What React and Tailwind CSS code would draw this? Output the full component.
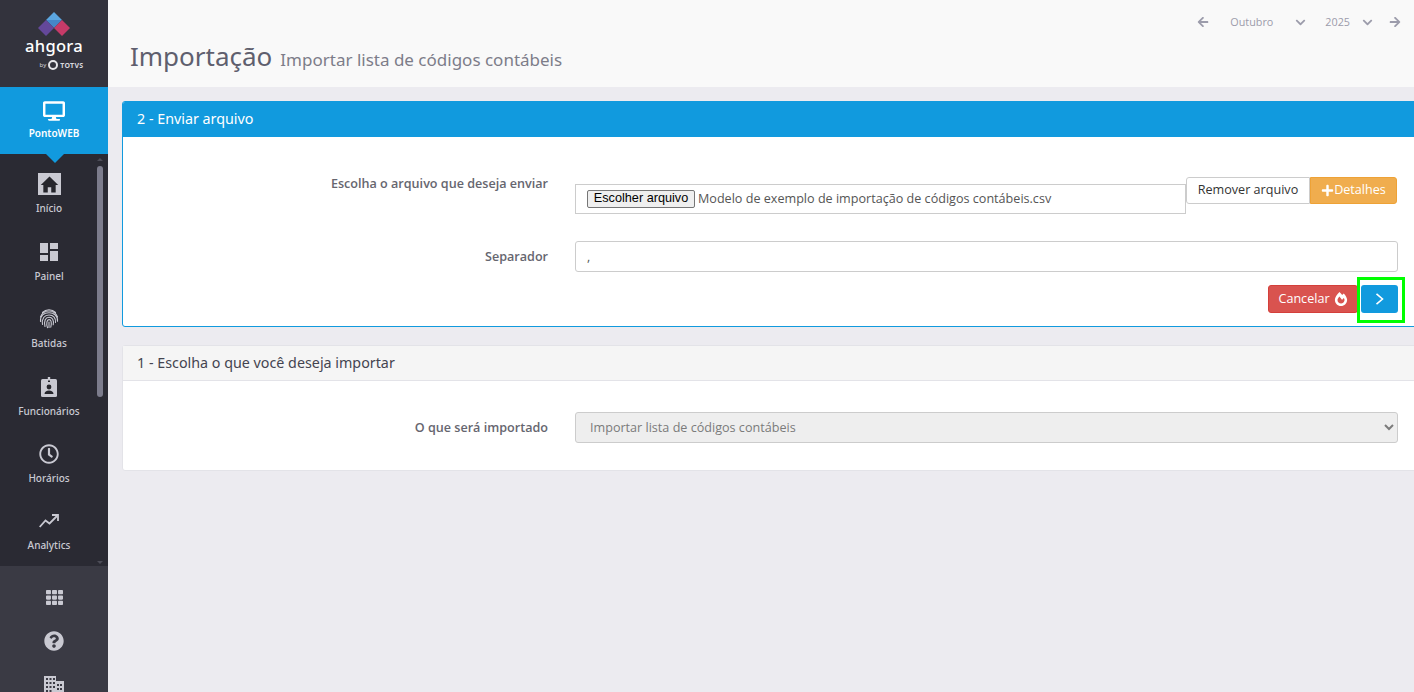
import React from "react";
import {
  FaArrowLeft,
  FaArrowRight,
  FaChevronDown,
  FaDesktop,
  FaFireAlt,
  FaPlus,
  FaQuestionCircle,
  FaRegClock,
  FaTh,
} from "react-icons/fa";

const titleFont = "font-['Noto_Sans','Open_Sans',sans-serif]";
const bodyFont = "font-['Open_Sans',sans-serif]";

function HomeIcon() {
  return (
    <span className="flex h-[22px] w-[23px] items-center justify-center bg-[#c9c9d2]">
      <svg viewBox="0 0 24 24" className="h-[19px] w-[19px]" fill="#25252c">
        <path d="M12 2 1 12.5h3.2V22h5.6v-6.5h4.4V22h5.6v-9.5H23L12 2z" />
      </svg>
    </span>
  );
}

function PainelIcon() {
  return (
    <svg viewBox="0 0 18 18" className="h-[18px] w-[18px]" fill="#c9c9d2">
      <rect x="0" y="0" width="8" height="10" />
      <rect x="10" y="0" width="8" height="6" />
      <rect x="0" y="12" width="8" height="6" />
      <rect x="10" y="8" width="8" height="10" />
    </svg>
  );
}

function FingerprintIcon() {
  return (
    <svg viewBox="0 0 20 20" className="h-[20px] w-[20px]" fill="none" stroke="#c9c9d2" strokeWidth="1.1" strokeLinecap="round">
      <path d="M3.5 3.5A9 9 0 0 1 16.5 3.5" />
      <path d="M1.5 8A9 9 0 0 1 18.5 8" />
      <path d="M1.5 12.5C1 6.5 5 3.7 10 3.7s9 3.3 8.5 8.5" />
      <path d="M3.5 15.5C2.5 9.5 5.5 6 10 6s7 3 6.5 7.5" />
      <path d="M6 17.5C4.7 12 6.5 8.3 10 8.3s5 2.7 4.2 7.5" />
      <path d="M8.5 18.7C7 14 8 10.6 10 10.6s3 2.4 1.8 7.6" />
      <path d="M10 13v5.5" />
    </svg>
  );
}

function BadgeIcon() {
  return (
    <svg viewBox="0 0 16 20" className="h-[20px] w-[16px]">
      <rect x="0" y="2" width="16" height="18" rx="1.5" fill="#c9c9d2" />
      <rect x="6.8" y="0" width="2.4" height="5" fill="#c9c9d2" />
      <rect x="7" y="3.5" width="2" height="1.5" fill="#25252c" />
      <circle cx="8" cy="10" r="2.4" fill="#25252c" />
      <path d="M3.5 17c0-2.4 2-3.6 4.5-3.6s4.500 1.200 4.500 3.600z" fill="#25252c" />
    </svg>
  );
}

function TrendIcon() {
  return (
    <svg viewBox="0 0 20 14" className="h-[14px] w-[20px]" fill="none" stroke="#c9c9d2" strokeWidth="1.8">
      <path d="M0.7 13 6.500 6.500 10.500 9.500 18 2" />
      <path d="M13 1h6v6" strokeLinejoin="miter" />
    </svg>
  );
}

function BuildingIcon() {
  return (
    <svg viewBox="0 0 20 20" className="h-[20px] w-[20px]" fill="#c9c9d2">
      <path d="M0 0h12v5h8v15H0zM2 2v2h2V2zm3.500 0v2h2V2zM9 2v2h2V2zM2 6v2h2V6zm3.500 0v2h2V6zM9 6v2h2V6zM2 10v2h2v-2zm3.500 0v2h2v-2zM9 10v2h2v-2zM2 14v2h2v-2zm3.500 0v2h2v-2zM13 8v2h2V8zm3 0v2h2V8zm-3 4v2h2v-2zm3 0v2h2v-2z" fillRule="evenodd" />
    </svg>
  );
}

function Logo() {
  return (
    <div className="flex h-[87px] shrink-0 flex-col items-center bg-[#33333d] pt-[12px]">
      <svg viewBox="0 0 32 24" className="h-[24px] w-[32px]">
        <path d="M16 0 24 8 16 8 8 8z" fill="#5ba6e0" />
        <path d="M8 8H24L16 16z" fill="#4585c8" />
        <path d="M8 8 16 16 8 24 0 16z" fill="#64489a" />
        <path d="M24 8 32 16 24 24 16 16z" fill="#c63a68" />
      </svg>
      <span className={`${titleFont} mt-[1px] text-[16.500px] leading-[18px] font-medium tracking-[0.3px] text-white`}>
        ahgora
      </span>
      <div className="mt-[5px] ml-[15px] flex items-center gap-[2px] text-[#d8d8de]">
        <span className="text-[6px] leading-none">by</span>
        <span className="h-[10px] w-[10px] rounded-full border-2 border-[#e6e6ea]" />
        <span className={`${titleFont} text-[7px] leading-none font-bold tracking-[0.3px]`}>TOTVS</span>
      </div>
    </div>
  );
}

function NavItem({ icon, label }) {
  return (
    <div className="flex h-[67.400px] w-[98px] shrink-0 flex-col items-center justify-end pb-[6px]">
      <div className="flex h-[24px] items-center justify-center text-[#c9c9d2]">{icon}</div>
      <span className={`${titleFont} mt-[5px] text-[10px] leading-[14px] font-medium text-[#c9c9d2]`}>
        {label}
      </span>
    </div>
  );
}

function Sidebar() {
  return (
    <aside className="flex h-full w-[108px] shrink-0 flex-col overflow-hidden">
      <Logo />
      <div className="relative flex h-[67px] shrink-0 flex-col items-center bg-[#119ade] pt-[13px] text-white">
        <FaDesktop className="text-[22px]" />
        <span className={`${titleFont} mt-[4px] text-[10px] leading-[14px] font-semibold`}>PontoWEB</span>
        <span className="absolute top-[67px] left-[46px] z-10 h-0 w-0 border-x-[9px] border-t-[9px] border-x-transparent border-t-[#119ade]" />
      </div>
      <nav className="relative flex h-[412px] shrink-0 flex-col bg-[#2a2a33]">
        <NavItem icon={<HomeIcon />} label="Início" />
        <NavItem icon={<PainelIcon />} label="Painel" />
        <NavItem icon={<FingerprintIcon />} label="Batidas" />
        <NavItem icon={<BadgeIcon />} label="Funcionários" />
        <NavItem icon={<FaRegClock className="text-[20px]" />} label="Horários" />
        <NavItem icon={<TrendIcon />} label="Analytics" />
        <span className="absolute top-[4px] right-[5px] h-0 w-0 border-x-[3px] border-b-[3px] border-x-transparent border-b-[#4d4d58]" />
        <span className="absolute top-[12px] right-[5px] h-[231px] w-[6px] rounded-[3px] bg-[#7c7c8c]" />
        <span className="absolute right-[5px] bottom-[2px] h-0 w-0 border-x-[3px] border-t-[3px] border-x-transparent border-t-[#4d4d58]" />
      </nav>
      <div className="flex flex-1 flex-col items-center gap-[25px] bg-[#3a3a44] pt-[23px] text-[#c9c9d2]">
        <FaTh className="shrink-0 text-[17px]" />
        <FaQuestionCircle className="shrink-0 text-[20px]" />
        <BuildingIcon />
      </div>
    </aside>
  );
}

function TopBar() {
  return (
    <header className="flex h-[87px] shrink-0 flex-col bg-[#f9f9f9] pl-[22px]">
      <div className={`${bodyFont} flex h-[44px] items-center justify-end pr-[13px] text-[10.800px] text-[#9c9cab]`}>
        <FaArrowLeft className="mr-[21px] text-[12px]" />
        <span>Outubro</span>
        <FaChevronDown className="mr-[19px] ml-[22px] text-[11px]" />
        <span>2025</span>
        <FaChevronDown className="mr-[16px] ml-[12px] text-[11px]" />
        <FaArrowRight className="text-[12px]" />
      </div>
      <div className={`${titleFont} -mt-[2px] flex items-baseline gap-[8px]`}>
        <h1 className="text-[26px] leading-[28px] text-[#5f5f6e]">Importação</h1>
        <span className="text-[17px] leading-[28px] text-[#7d7d89]">Importar lista de códigos contábeis</span>
      </div>
    </header>
  );
}

function FormRow({ label, children, className = "" }) {
  return (
    <div className={`flex ${className}`}>
      <label className={`${bodyFont} w-[425px] shrink-0 text-right text-[12.600px] leading-[18px] font-semibold text-[#66666f]`}>
        {label}
      </label>
      <div className="ml-[27px] min-w-0 flex-1">{children}</div>
    </div>
  );
}

function UploadCard() {
  return (
    <section className="-mr-[2px] overflow-hidden rounded-l-[3px] border border-[#119ade] bg-white">
      <div className={`${titleFont} flex h-[35px] items-center bg-[#119ade] pb-[1px] pl-[14px] text-[14.300px] text-white`}>
        2 - Enviar arquivo
      </div>
      <div className="pt-[38px] pr-[17px] pb-[13px]">
        <FormRow label="Escolha o arquivo que deseja enviar" className="items-start">
          <div className="flex items-start">
            <div className="mt-[9px] flex h-[30px] flex-1 items-center border border-[#cccccc] pl-[11px]">
              <span className="flex h-[18px] w-[108px] items-center justify-center rounded-[2px] border border-[#767676] bg-[#efefef] font-['Liberation_Sans',sans-serif] text-[12.700px] text-black">
                Escolher arquivo
              </span>
              <span className={`${bodyFont} ml-[3px] text-[12.600px] text-[#555555]`}>
                Modelo de exemplo de importação de códigos contábeis.csv
              </span>
            </div>
            <button className={`${bodyFont} mt-[2px] h-[27px] w-[124px] rounded-l-[3px] border border-[#cccccc] bg-white text-[12.600px] text-[#333333]`}>
              Remover arquivo
            </button>
            <button className={`${bodyFont} mt-[2px] mr-[1px] flex h-[27px] w-[87px] items-center justify-center rounded-r-[3px] border border-[#eea236] bg-[#f0ad4e] text-[12.600px] text-white`}>
              <FaPlus className="text-[13px]" />
              Detalhes
            </button>
          </div>
        </FormRow>
        <FormRow label="Separador" className="mt-[27px] items-center">
          <input
            readOnly
            value=","
            className={`${bodyFont} block h-[31px] w-full rounded-[3px] border border-[#cccccc] pl-[11px] text-[12.600px] text-[#555555]`}
          />
        </FormRow>
        <div className="relative mt-[13px] flex justify-end gap-[3px]">
          <button className={`${bodyFont} flex h-[28px] w-[90px] items-center justify-center gap-[4px] rounded-[3px] border border-[#d43f3a] bg-[#d9534f] text-[12.600px] text-white`}>
            Cancelar
            <FaFireAlt className="text-[14px]" />
          </button>
          <button className="flex h-[28px] w-[37px] items-center justify-center rounded-[3px] bg-[#119ade] text-white">
            <svg viewBox="0 0 10 12" className="h-[12px] w-[10px]" fill="none" stroke="currentColor" strokeWidth="1.6">
              <path d="M1.500 0.800 7.500 6 1.500 11.200" />
            </svg>
          </button>
          <span className="absolute top-[-8px] right-[-7px] h-[46px] w-[48px] border-[3px] border-[#00ff00]" />
        </div>
      </div>
    </section>
  );
}

function ImportTypeCard() {
  return (
    <section className="-mr-[2px] rounded-l-[3px] border border-[#e3e3e8] bg-white">
      <div className={`${titleFont} flex h-[35px] items-center border-b border-[#e3e3e8] bg-[#f5f5f5] pb-[1px] pl-[14px] text-[14.300px] text-[#444450]`}>
        1 - Escolha o que você deseja importar
      </div>
      <div className="pt-[31px] pr-[17px] pb-[27px]">
        <FormRow label="O que será importado" className="items-center">
          <select
            disabled
            className={`${bodyFont} block h-[31px] w-full rounded-[3px] border border-[#cccccc] bg-[#eeeeee] pl-[10px] text-[12.600px] text-[#7b7b7b]`}
          >
            <option>Importar lista de códigos contábeis</option>
          </select>
        </FormRow>
      </div>
    </section>
  );
}

export default function App() {
  return (
    <div className="flex h-[692px] w-full overflow-hidden bg-[#ecebf0]">
      <Sidebar />
      <main className="flex min-w-0 flex-1 flex-col">
        <TopBar />
        <div className="flex flex-col gap-[18px] pt-[14px] pl-[14px]">
          <UploadCard />
          <ImportTypeCard />
        </div>
      </main>
    </div>
  );
}
